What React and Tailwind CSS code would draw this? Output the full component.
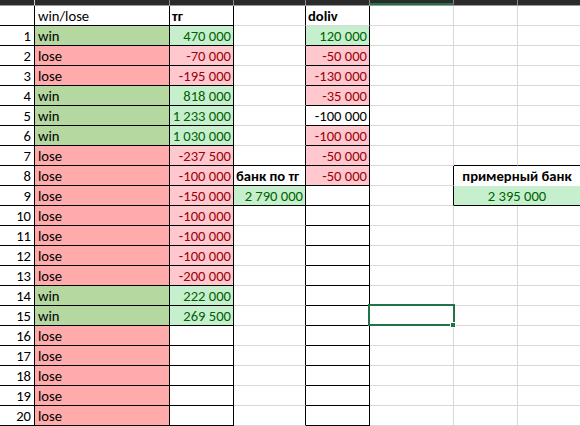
import React from 'react';

const widths = [35, 135, 64, 72, 64, 84, 64, 62];

const GREEN_BG = 'bg-[#c6efce]';
const RED_BG = 'bg-[#ffc7ce]';

// column A, B, D per row
const rows = [
  ['win', '470 000', '120 000'],
  ['lose', '-70 000', '-50 000'],
  ['lose', '-195 000', '-130 000'],
  ['win', '818 000', '-35 000'],
  ['win', '1 233 000', '-100 000'],
  ['win', '1 030 000', '-100 000'],
  ['lose', '-237 500', '-50 000'],
  ['lose', '-100 000', '-50 000'],
  ['lose', '-150 000', ''],
  ['lose', '-100 000', ''],
  ['lose', '-100 000', ''],
  ['lose', '-100 000', ''],
  ['lose', '-200 000', ''],
  ['win', '222 000', ''],
  ['win', '269 500', ''],
  ['lose', '', ''],
  ['lose', '', ''],
  ['lose', '', ''],
  ['lose', '', ''],
  ['lose', '', ''],
];

const rightCls = {
  k: 'border-r border-r-black',
  g: 'border-r border-r-[#d9d9d9]',
  n: '',
};
const bottomCls = {
  k: 'border-b border-b-black',
  g: 'border-b border-b-[#d9d9d9]',
  n: '',
};

const Cell = ({ w, r = 'g', b = 'g', bg = 'bg-white', text = 'text-black', align = 'left', bold, children, extra = '' }) => (
  <div
    style={{ width: w }}
    className={`h-5 shrink-0 overflow-visible whitespace-nowrap px-[2px] leading-[21px] ${rightCls[r]} ${bottomCls[b]} ${bg} ${text} ${
      align === 'right' ? 'text-right' : align === 'center' ? 'text-center' : 'text-left'
    } ${bold ? 'font-bold' : ''} ${extra}`}
  >
    {children}
  </div>
);

function numColors(v) {
  if (!v) return { bg: 'bg-white', text: 'text-black' };
  return v.startsWith('-')
    ? { bg: RED_BG, text: 'text-[#9c0006]' }
    : { bg: GREEN_BG, text: 'text-[#006100]' };
}

export default function App() {
  return (
    <div
      className="h-[426px] w-[580px] overflow-hidden bg-white text-[14.6px]"
      style={{ fontFamily: "Carlito, 'Liberation Sans Narrow', 'Liberation Sans', sans-serif" }}
    >
      {/* column header strip */}
      <div className="flex h-[6px] border-b border-b-[#9b9b9b] bg-[#2b2b2b]">
        {widths.map((w, i) => (
          <div
            key={i}
            style={{ width: w }}
            className={`h-[5px] shrink-0 ${i === 7 ? '' : i === 0 ? 'border-r border-r-[#d0d0d0]' : 'border-r border-r-[#8a8a8a]'} ${
              i === 5 ? 'border-b-2 border-b-[#217346]' : ''
            }`}
          />
        ))}
      </div>

      {/* header row */}
      <div className="flex">
        <Cell w={widths[0]} r="k" b="k" />
        <Cell w={widths[1]} r="k" b="k" extra="pl-[3px]">win/lose</Cell>
        <Cell w={widths[2]} r="k" b="k" bold>тг</Cell>
        <Cell w={widths[3]} r="k" b="g" />
        <Cell w={widths[4]} r="k" b="g" bold>doliv</Cell>
        <Cell w={widths[5]} />
        <Cell w={widths[6]} />
        <Cell w={widths[7]} r="n" />
      </div>

      {rows.map(([a, b, d], idx) => {
        const n = idx + 1;
        const win = a === 'win';
        const bc = numColors(b);
        let dc = numColors(d);
        if (n === 5) dc = { bg: 'bg-white', text: 'text-black' };
        const cBottom = n === 7 || n === 8 || n === 9 ? 'k' : 'g';
        const fgBottom = n === 7 || n === 9 ? 'k' : n === 8 ? 'n' : 'g';
        const eRight = n === 8 || n === 9 ? 'k' : 'g';
        return (
          <div key={n} className="flex">
            <Cell w={widths[0]} r="k" b="k" align="right" extra="pr-[3px]">{n}</Cell>
            <Cell
              w={widths[1]}
              r="k"
              b="k"
              bg={win ? 'bg-[#b4d8a0]' : 'bg-[#ffabab]'}
              extra="pl-[3px]"
            >
              {a}
            </Cell>
            <Cell w={widths[2]} r="k" b="k" align="right" bg={bc.bg} text={bc.text}>{b}</Cell>
            {n === 8 ? (
              <Cell w={widths[3]} r="k" b="k" bold>банк по тг</Cell>
            ) : n === 9 ? (
              <Cell w={widths[3]} r="k" b="k" align="right" bg={GREEN_BG} text="text-[#006100]">2 790 000</Cell>
            ) : (
              <Cell w={widths[3]} r="k" b={cBottom} />
            )}
            <Cell w={widths[4]} r="k" b="k" align="right" bg={dc.bg} text={dc.text}>{d}</Cell>
            <Cell w={widths[5]} r={eRight} extra={n === 15 ? 'relative' : ''}>
              {n === 15 && (
                <>
                  <div className="pointer-events-none absolute -left-[2px] -top-[2px] h-[22px] w-[87px] border-2 border-[#217346]" />
                  <div className="absolute -bottom-[3px] -right-[3px] h-[6px] w-[6px] border border-white bg-[#217346]" />
                </>
              )}
            </Cell>
            {n === 8 ? (
              <Cell w={widths[6] + widths[7]} r="n" b="n" align="center" bold>примерный банк</Cell>
            ) : n === 9 ? (
              <Cell w={widths[6] + widths[7]} r="n" b="k" align="center" bg={GREEN_BG} text="text-[#006100]">2 395 000</Cell>
            ) : (
              <>
                <Cell w={widths[6]} b={fgBottom} />
                <Cell w={widths[7]} r="n" b={fgBottom} />
              </>
            )}
          </div>
        );
      })}
    </div>
  );
}
